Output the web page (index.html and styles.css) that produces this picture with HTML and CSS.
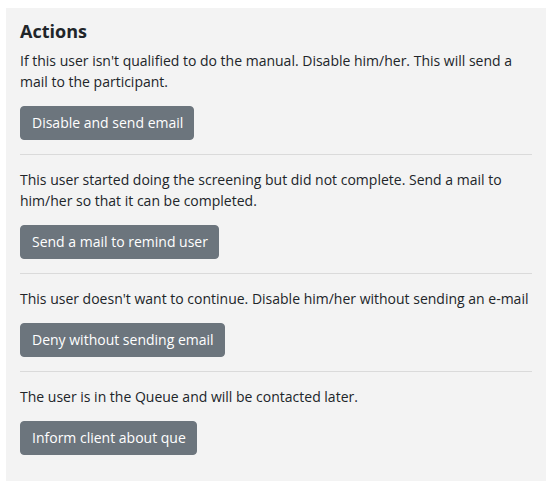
FILE: index.html
```html
<!DOCTYPE html>
<html lang="en">
<head>
<meta charset="utf-8">
<title>Actions</title>
<link rel="stylesheet" href="styles.css">
</head>
<body>
<div class="panel">
  <h3 class="title">Actions</h3>
  <div class="section">
    <p class="desc">If this user isn't qualified to do the manual. Disable him/her. This will send a mail to the participant.</p>
    <button class="btn">Disable and send email</button>
  </div>
  <hr class="sep">
  <div class="section">
    <p class="desc">This user started doing the screening but did not complete. Send a mail to him/her so that it can be completed.</p>
    <button class="btn">Send a mail to remind user</button>
  </div>
  <hr class="sep">
  <div class="section">
    <p class="desc">This user doesn't want to continue. Disable him/her without sending an e-mail</p>
    <button class="btn">Deny without sending email</button>
  </div>
  <hr class="sep">
  <div class="section">
    <p class="desc">The user is in the Queue and will be contacted later.</p>
    <button class="btn">Inform client about que</button>
  </div>
</div>
</body>
</html>
```
FILE: styles.css
```css
html, body {
  background: #ffffff;
}
body {
  margin: 8px 4px 5px 6px;
  font-family: "Open Sans", "Noto Sans", sans-serif;
  font-size: 14px;
  line-height: 21px;
  color: #212529;
}
.panel {
  background: #f3f3f3;
  padding: 13px 14px 27px 14px;
  height: 473px;
  box-sizing: border-box;
}
.title {
  margin: 0 0 7px 0;
  font-size: 18px;
  line-height: 21.6px;
  font-weight: 700;
  color: #212529;
}
.section {
  display: flex;
  flex-direction: column;
  align-items: flex-start;
}
.desc {
  margin: 0 0 14px 0;
}
.btn {
  font-family: "Open Sans", "Noto Sans", sans-serif;
  font-size: 14px;
  line-height: 20px;
  color: #ffffff;
  background: #6c757d;
  border: 1px solid #6c757d;
  border-radius: 4px;
  padding: 6px 10px 6px 11px;
  height: 34px;
  box-sizing: border-box;
  cursor: pointer;
}
.sep {
  margin: 14px 0;
  border: 0;
  border-top: 1px solid #dadada;
  height: 0;
}
```
